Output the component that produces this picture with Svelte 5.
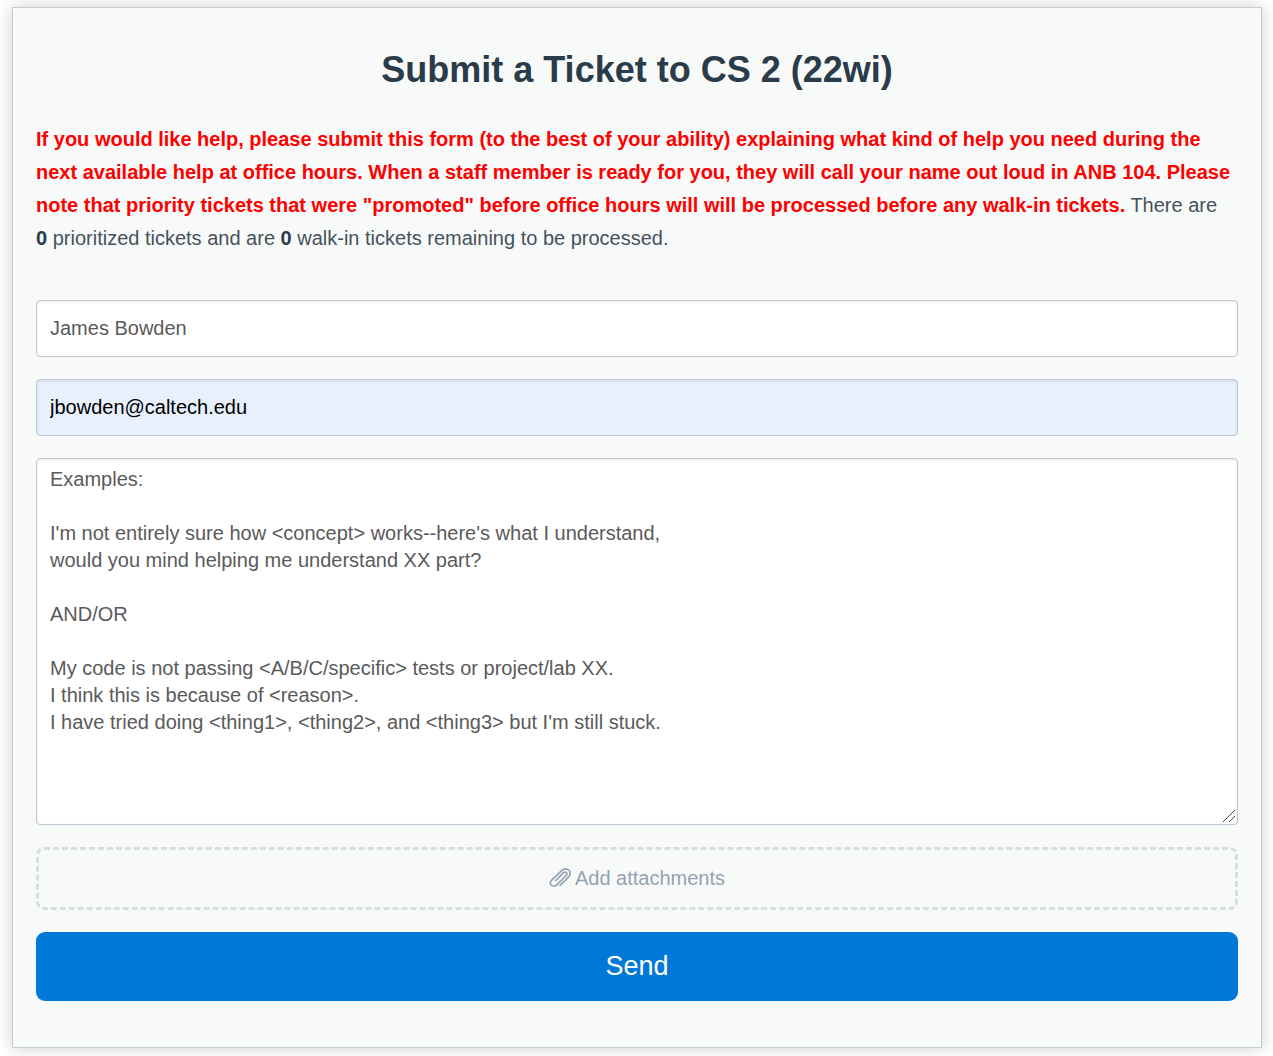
<script>
	let name = '';
	let email = 'jbowden@caltech.edu';
	let message = '';
	let files;

	const prioritized = 0;
	const walkins = 0;

	const placeholder = [
		'Examples:',
		'',
		"I'm not entirely sure how <concept> works--here's what I understand,",
		'would you mind helping me understand XX part?',
		'',
		'AND/OR',
		'',
		'My code is not passing <A/B/C/specific> tests or project/lab XX.',
		'I think this is because of <reason>.',
		"I have tried doing <thing1>, <thing2>, and <thing3> but I'm still stuck."
	].join('\n');
</script>

<main>
	<h1>Submit a Ticket to CS 2 (22wi)</h1>
	<p>
		<strong class="notice">If you would like help, please submit this form (to the best of your ability) explaining what kind of help you need during the next available help at office hours. When a staff member is ready for you, they will call your name out loud in ANB 104. Please note that priority tickets that were "promoted" before office hours will will be processed before any walk-in tickets.</strong>
		There are <strong>{prioritized}</strong>&nbsp;prioritized tickets and are <strong>{walkins}</strong>&nbsp;walk-in tickets remaining to be processed.
	</p>

	<form on:submit|preventDefault>
		<input type="text" aria-label="Name" placeholder="James Bowden" bind:value={name} />
		<input class="filled" type="email" aria-label="Email" bind:value={email} />
		<textarea aria-label="Message" {placeholder} bind:value={message}></textarea>
		<label class="attach">
			<input type="file" multiple bind:files />
			<svg viewBox="0 0 22 24" aria-hidden="true">
				<path d="M10.500 19 L19.300 10.300 C21.800 7.800 21.600 4.800 19.800 3.200 C17.800 1.400 14.800 1.600 12.600 3.600 L2.900 12.800 C1 14.600 0.800 16.800 2.300 18.200 C3.800 19.600 6.300 19.300 8 17.600 L16.800 9 C18.200 7.600 18.200 6.400 17.400 5.600 C16.500 4.800 15.200 5 14 6.200 L6.300 14" />
			</svg>
			<span>Add attachments</span>
		</label>
		<button type="submit">Send</button>
	</form>
</main>

<style>
	:global(body) {
		background: #fff;
	}

	main {
		box-sizing: border-box;
		margin: 7px 11px 8px 12px;
		padding: 38px 23px 46px;
		border: 1px solid #c1cbd5;
		background: #f8faf9;
		box-shadow: 0 0 15px rgba(0, 0, 0, 0.2);
		color: #47515b;
		font-family: "Liberation Sans", Arial, sans-serif;
		font-size: 20px;
	}

	h1 {
		margin: 0 0 29px;
		color: #2a3b49;
		font-size: 36px;
		line-height: 48px;
		text-align: center;
	}

	p {
		margin: 0 0 45px;
		line-height: 33px;
	}

	strong {
		color: #2a3b49;
	}

	.notice {
		color: #f00;
	}

	form {
		display: flex;
		flex-direction: column;
		gap: 22px;
	}

	form > input,
	textarea {
		box-sizing: border-box;
		width: 100%;
		margin: 0;
		padding: 0 13px;
		border: 1px solid #bec9d5;
		border-radius: 4px;
		background: #fff;
		box-shadow: inset 0 1px 3px rgba(0, 0, 0, 0.1);
		color: #000;
		font: inherit;
	}

	form > input {
		height: 57px;
	}

	form > .filled {
		background: #e8f0fe;
	}

	textarea {
		display: block;
		height: 367px;
		padding-top: 7px;
		line-height: 27px;
		resize: vertical;
	}

	textarea::-webkit-resizer {
		background: url("data:image/svg+xml,%3Csvg xmlns='http://www.w3.org/2000/svg' width='15' height='15'%3E%3Cpath d='M1 13L13 1M7 13L13 7' stroke='%23444'/%3E%3C/svg%3E") no-repeat;
	}

	::placeholder {
		color: #5a5a5a;
		opacity: 1;
	}

	.attach {
		display: flex;
		align-items: center;
		justify-content: center;
		gap: 4px;
		box-sizing: border-box;
		height: 63px;
		border: 3px dashed #d6dde3;
		border-radius: 8px;
		color: #95a2b2;
		cursor: pointer;
	}

	.attach input {
		position: absolute;
		width: 1px;
		height: 1px;
		opacity: 0;
	}

	.attach svg {
		width: 22px;
		height: 24px;
		fill: none;
		stroke: currentColor;
		stroke-width: 1.7;
	}

	button {
		height: 69px;
		border: 0;
		border-radius: 9px;
		background: #0078d9;
		color: #fff;
		font: inherit;
		font-size: 27px;
		cursor: pointer;
	}
</style>
